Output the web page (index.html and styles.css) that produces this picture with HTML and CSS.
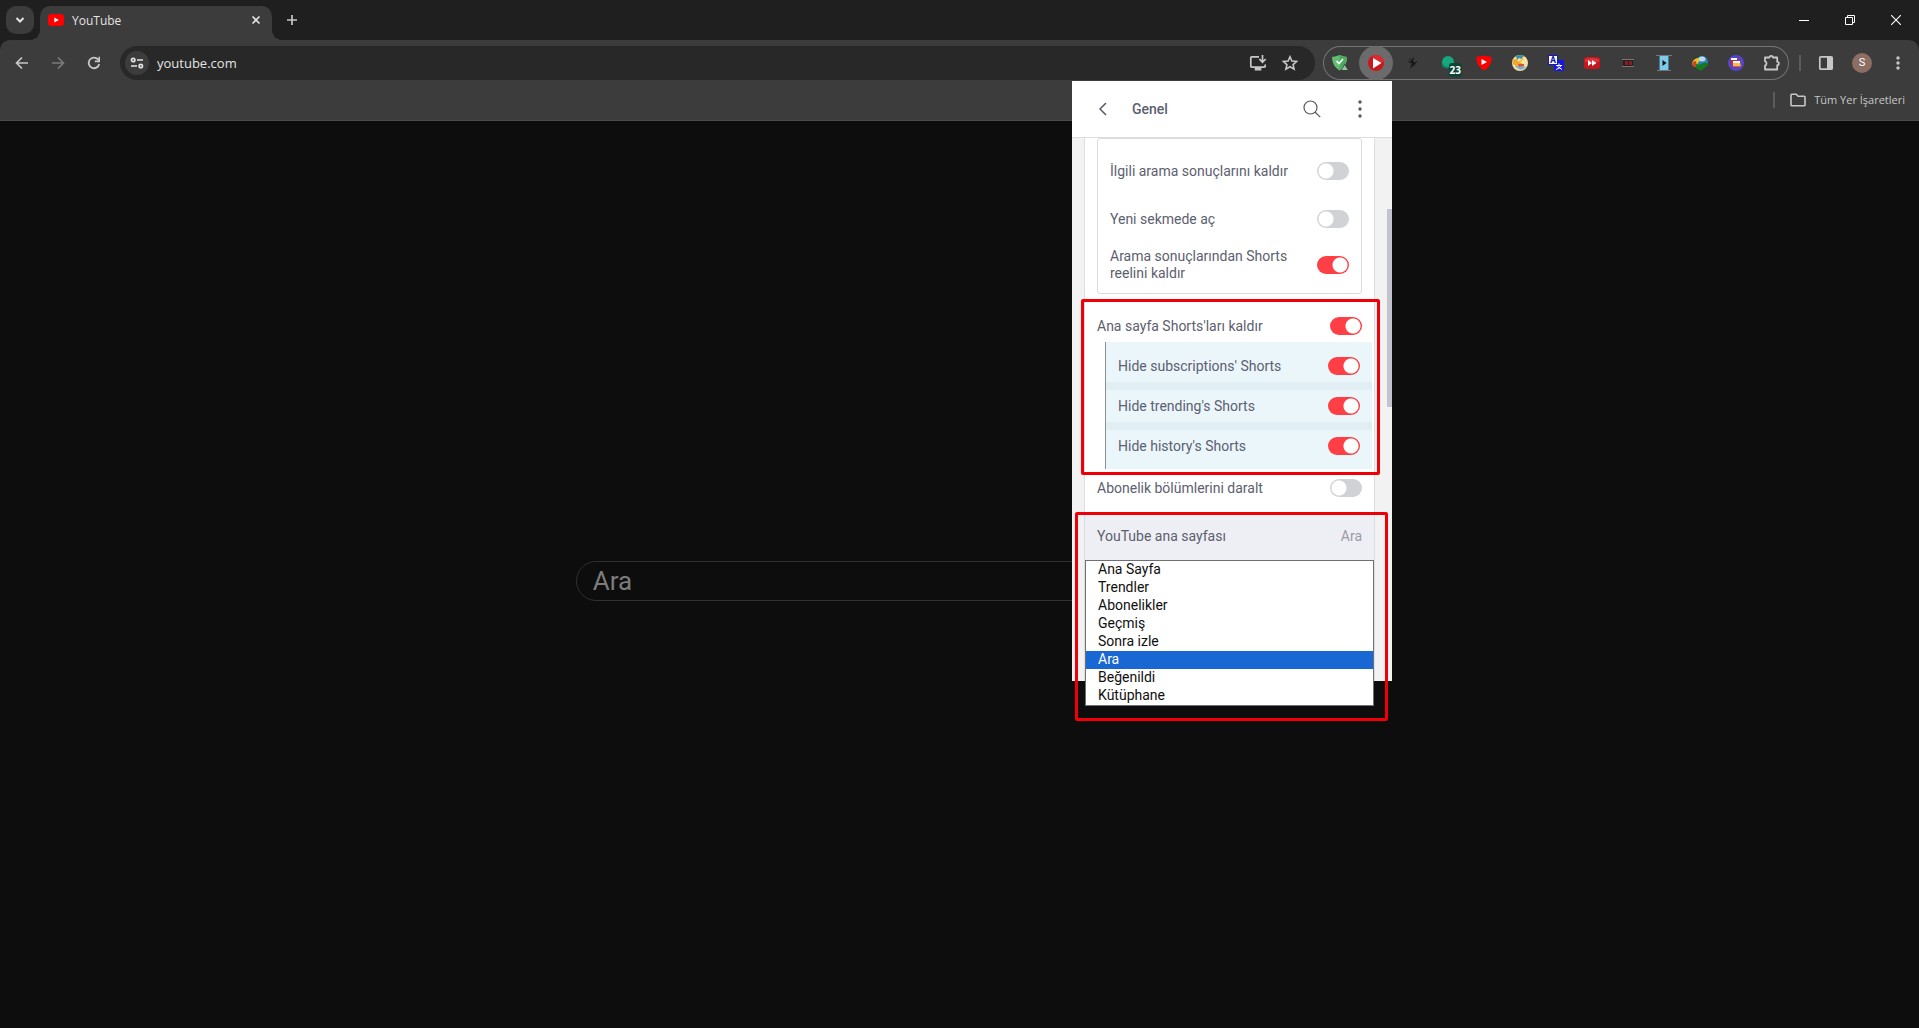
FILE: index.html
```html
<!DOCTYPE html>
<html lang="tr">

<head>
    <meta charset="UTF-8">
    <meta name="viewport" content="width=device-width, initial-scale=1.0">
    <title>YouTube</title>
    <link rel="stylesheet" href="styles.css">
</head>

<body>

    <header class="browser">
        <div class="tabstrip">
            <button class="tab-search" aria-label="Sekmelerde ara">
                <svg width="10" height="10" viewBox="0 0 10 10"><path d="M1.5 3L5 6.5 8.5 3" fill="none" stroke="#e3e3e3" stroke-width="2"/></svg>
            </button>
            <div class="tab">
                <svg width="16" height="16" viewBox="0 0 16 16"><rect y="2" width="16" height="12" rx="3" fill="#f00"/><path d="M6.4 5.4v5.2L10.8 8z" fill="#fff"/></svg>
                <span class="tab-title">YouTube</span>
                <button class="tab-close" aria-label="Sekmeyi kapat">
                    <svg width="10" height="10" viewBox="0 0 10 10"><path d="M1.5 1.5l7 7M8.5 1.5l-7 7" stroke="#e3e3e3" stroke-width="1.6"/></svg>
                </button>
            </div>
            <button class="new-tab" aria-label="Yeni sekme">
                <svg width="12" height="12" viewBox="0 0 12 12"><path d="M6 1v10M1 6h10" stroke="#c7c7c7" stroke-width="1.7"/></svg>
            </button>
            <div class="window-buttons">
                <button aria-label="Küçült"><svg width="10" height="10" viewBox="0 0 10 10"><path d="M0 5.5h10" stroke="#fff"/></svg></button>
                <button aria-label="Önceki boyut"><svg width="10" height="10" viewBox="0 0 10 10"><path d="M.5 2.5h7v7h-7zM2.5 2.5v-2h7v7h-2" fill="none" stroke="#fff"/></svg></button>
                <button aria-label="Kapat"><svg width="10" height="10" viewBox="0 0 10 10"><path d="M0 0l10 10M10 0L0 10" stroke="#fff" stroke-width="1.1"/></svg></button>
            </div>
        </div>

        <div class="toolbar">
            <button class="tool" aria-label="Geri">
                <svg width="16" height="16" viewBox="0 0 16 16"><path d="M14 8H3M8 2.5L2.5 8 8 13.5" fill="none" stroke="#c7c7c7" stroke-width="1.7"/></svg>
            </button>
            <button class="tool" aria-label="İleri" disabled>
                <svg width="16" height="16" viewBox="0 0 16 16"><path d="M2 8h11M8 2.5L13.5 8 8 13.5" fill="none" stroke="#7b7b7b" stroke-width="1.7"/></svg>
            </button>
            <button class="tool" aria-label="Yenile">
                <svg width="16" height="16" viewBox="0 0 16 16"><path d="M13.2 9A5.3 5.3 0 1 1 12 4.4L13.4 6" fill="none" stroke="#c7c7c7" stroke-width="1.8"/><path d="M14 1.8v5.4H8.8V5.6h3.6V1.8z" fill="#c7c7c7"/></svg>
            </button>

            <div class="omnibox">
                <button class="site-info" aria-label="Site bilgileri">
                    <svg width="14" height="12" viewBox="0 0 14 12" fill="none" stroke="#e3e3e3" stroke-width="1.7"><circle cx="3.2" cy="3" r="1.7"/><path d="M7 3h6M1 9h6"/><circle cx="10.8" cy="9" r="1.7"/></svg>
                </button>
                <input class="url" type="text" value="youtube.com" aria-label="Adres çubuğu">
                <button class="tool" aria-label="Uygulamayı yükle">
                    <svg width="18" height="16" viewBox="0 0 18 16" fill="none" stroke="#c7c7c7" stroke-width="1.7"><path d="M10 1.9H2.6a.8.8 0 0 0-.8.8v8.6c0 .4.4.8.8.8h12.8c.4 0 .8-.4.8-.8V9.5"/><path d="M13.5 0v6.5M10.3 4l3.2 3.2L16.7 4"/><path d="M5.7 14h6.6" stroke-width="3"/></svg>
                </button>
                <button class="tool" aria-label="Yer işareti ekle">
                    <svg width="16" height="16" viewBox="0 0 16 16"><path d="M8 1.8l1.9 4.3 4.7.4-3.5 3.1 1 4.6L8 11.8l-4.1 2.4 1-4.6L1.4 6.5l4.7-.4z" fill="none" stroke="#c7c7c7" stroke-width="1.6"/></svg>
                </button>
            </div>

            <div class="extensions">
                <button aria-label="AdGuard">
                    <svg width="18" height="18" viewBox="0 0 18 18"><path d="M1 3q4-.5 7.500-2Q12 2.5 16 3q.3 9-7.500 13.500Q1 12 1 3z" fill="#62bd72"/><path d="M8.500 1Q12 2.500 16 3q.3 9-7.500 13.500z" fill="#4fa960"/><path d="M5.500 7l2.500 2.600L12 5" fill="none" stroke="#fff" stroke-width="1.500"/><path d="M13.500 9.500l4 6.500h-7z" fill="#3c3c3c"/><path d="M13.700 11l3 5h-6z" fill="#8fc79a"/></svg>
                </button>
                <button class="active" aria-label="ImprovedTube">
                    <svg width="18" height="18" viewBox="0 0 18 18"><circle cx="9" cy="9" r="8" fill="#c9171f"/><path d="M5 2a8 8 0 0 1 12 6L9 9z" fill="#dc2a31"/><path d="M6 4v10.500L14.500 9z" fill="#fff"/></svg>
                </button>
                <button aria-label="Bolt">
                    <svg width="14" height="14" viewBox="0 0 14 14"><path d="M9 1L4 7h3l-2 6 6-7H8z" fill="#151515"/><path d="M6 2L3 6M12 5l-4 6" stroke="#222"/></svg>
                </button>
                <button class="with-badge" aria-label="Ghostery 23">
                    <svg width="16" height="16" viewBox="0 0 16 16"><path d="M2 7a6 6 0 0 1 12 0v5H6Q2 12 2 7z" fill="#16a77c"/><path d="M2.500 10q3 3 6 2" stroke="#0e8e68" fill="none" stroke-width="2"/></svg>
                    <span class="badge">23</span>
                </button>
                <button aria-label="Enhancer for YouTube">
                    <svg width="16" height="16" viewBox="0 0 16 16"><path d="M.5 1.500Q4 2 8 .5q4 1.500 7.500 1 1 9-7.500 14Q-.5 10.500.5 1.500z" fill="#f00"/><path d="M5.500 4v6L11 7z" fill="#fff"/></svg>
                </button>
                <button aria-label="Harita">
                    <svg width="18" height="18" viewBox="0 0 18 18"><circle cx="9" cy="9" r="8" fill="#f2dfae"/><path d="M5 2q5-2 8 0l-3 3-2-1-2 2z" fill="#3c8f98"/><path d="M1 6l4-1 3 3 4-4 2 3-4 4-5 1-3-2z" fill="#f2a62e"/><path d="M9 8l5-4 2 3-4 3z" fill="#fbe98f"/><path d="M4 12l8 0 3 1q-5 6-11-1z" fill="#7fb4c8"/><path d="M7 10l6 0 0 2-5 1z" fill="#d75443"/></svg>
                </button>
                <button aria-label="Çeviri">
                    <svg width="18" height="18" viewBox="0 0 18 18"><rect x="7" y="6" width="10" height="11" rx="1" fill="#1717e2"/><rect x="1.500" y="1.500" width="9" height="9" fill="#fff" stroke="#1717cc"/><text x="3" y="9" class="glyph-a">A</text><path d="M9 11.500h6M12 9.500v2M14 11.500q-1 3-5 4M10.500 12.500l4.500 3" stroke="#fff" fill="none"/></svg>
                </button>
                <button aria-label="Hızlı ileri">
                    <svg width="18" height="14" viewBox="0 0 18 14"><rect x="1" y="1" width="16" height="12" rx="3" fill="#c5161d"/><path d="M2 3q6-2 14 0v3H2z" fill="#df3339"/><path d="M5 4v6l4-3zM9 4v6l4.500-3z" fill="#fff"/></svg>
                </button>
                <button aria-label="Sinema">
                    <svg width="14" height="10" viewBox="0 0 14 10"><path d="M2 1h10v8H2z" fill="#222"/><path d="M1 1.500h12M1 8.500h12" stroke="#777"/><path d="M4 3h3v4H4zM8 3h3v4H8z" fill="#8d1b22"/></svg>
                </button>
                <button aria-label="Video">
                    <svg width="16" height="18" viewBox="0 0 16 18"><path d="M3 2h10v14H3z" fill="#7ccbea"/><path d="M0 1.500h16M1 16.500h14" stroke="#777"/><path d="M3.500 2v14M12.500 2v14" stroke="#4b7d92"/><path d="M6.500 6v6l4-3z" fill="#111"/></svg>
                </button>
                <button aria-label="IDM">
                    <svg width="18" height="18" viewBox="0 0 18 18"><circle cx="11" cy="8" r="6" fill="#2f7fc0"/><ellipse cx="11" cy="5" rx="3.500" ry="2.500" fill="#b9dcef"/><path d="M1 9q2-5 7-5 1 3-1 5l-2 4-3-1z" fill="#e9c521"/><path d="M1 10q1-3 4-3 1 3 0 6-3 0-4-3z" fill="#c9461f"/><path d="M5 10q3 1 5 0 3-2 7-1 0 3-3 4l-4 4-5-3z" fill="#137b1c"/></svg>
                </button>
                <button aria-label="Dosyalar">
                    <svg width="18" height="18" viewBox="0 0 18 18"><circle cx="9" cy="9" r="8" fill="#5546c8"/><path d="M4 4h6v2H4z" fill="#fff"/><path d="M4 6h9v1H6v4H4z" fill="#cb2742"/><path d="M6 8h7l1 5H6z" fill="#ffb74b"/><path d="M6 7h7v2H6z" fill="#fff"/><path d="M6 12h8v1H6z" fill="#e4572f"/></svg>
                </button>
                <button aria-label="Uzantılar">
                    <svg width="18" height="18" viewBox="0 0 18 18"><path d="M2 3.500h4.500a1.700 1.700 0 0 1 3.400 0h4.300v4.300a1.700 1.700 0 0 1 0 3.400v4.300H2v-4a2.200 2.200 0 0 0 0-4.200z" fill="none" stroke="#c7c7c7" stroke-width="1.800" stroke-linejoin="round"/></svg>
                </button>
            </div>

            <span class="divider"></span>
            <button class="tool" aria-label="Yan panel">
                <svg width="16" height="16" viewBox="0 0 16 16"><rect x="1.800" y="1.800" width="12.400" height="12.400" rx="1" fill="none" stroke="#c7c7c7" stroke-width="1.700"/><path d="M9 2h5v12H9z" fill="#c7c7c7"/></svg>
            </button>
            <button class="tool" aria-label="Profil"><span class="avatar">S</span></button>
            <button class="tool" aria-label="Menü">
                <svg width="4" height="16" viewBox="0 0 4 16" fill="#c7c7c7"><circle cx="2" cy="3" r="1.700"/><circle cx="2" cy="8" r="1.700"/><circle cx="2" cy="13" r="1.700"/></svg>
            </button>
        </div>

        <nav class="bookmarks">
            <span class="divider"></span>
            <a href="#">
                <svg width="16" height="14" viewBox="0 0 16 14"><path d="M1 2.500V12q0 .8.800.8h12.400q.8 0 .8-.8V4q0-.8-.8-.8H8L6.300 1.300H1.800q-.8 0-.8.8z" fill="none" stroke="#c7c7c7" stroke-width="1.600"/></svg>
                Tüm Yer İşaretleri
            </a>
        </nav>
    </header>

    <main class="page">
        <input class="search" type="text" placeholder="Ara" aria-label="Ara">
    </main>

    <!-- extension popup -->
    <section class="popup">
        <div class="popup-header">
            <button class="back" aria-label="Geri">
                <svg width="10" height="14" viewBox="0 0 10 14"><path d="M7 1L1 7l6 6" fill="none" stroke="#555862" stroke-width="1.500"/></svg>
            </button>
            <h1>Genel</h1>
            <button aria-label="Ara">
                <svg width="18" height="18" viewBox="0 0 18 18" fill="none" stroke="#555862" stroke-width="1.200"><circle cx="7.500" cy="7.500" r="6.500"/><path d="M12 12l5.200 5.200"/></svg>
            </button>
            <button aria-label="Menü">
                <svg width="4" height="18" viewBox="0 0 4 18" fill="#555862"><circle cx="2" cy="2" r="1.700"/><circle cx="2" cy="9" r="1.700"/><circle cx="2" cy="16" r="1.700"/></svg>
            </button>
        </div>

        <div class="settings">
            <div class="group">
                <label class="row">İlgili arama sonuçlarını kaldır <input class="switch" type="checkbox"></label>
                <label class="row">Yeni sekmede aç <input class="switch" type="checkbox"></label>
                <label class="row two-line"><span>Arama sonuçlarından Shorts reelini kaldır</span> <input class="switch" type="checkbox" checked></label>
            </div>

            <label class="row home-shorts">Ana sayfa Shorts'ları kaldır <input class="switch" type="checkbox" checked></label>
            <div class="sublist">
                <label class="row">Hide subscriptions' Shorts <input class="switch" type="checkbox" checked></label>
                <label class="row">Hide trending's Shorts <input class="switch" type="checkbox" checked></label>
                <label class="row">Hide history's Shorts <input class="switch" type="checkbox" checked></label>
            </div>

            <label class="row collapse">Abonelik bölümlerini daralt <input class="switch" type="checkbox"></label>

            <div class="row select-row">
                <label for="homepage">YouTube ana sayfası</label>
                <span class="value">Ara</span>
                <select id="homepage" class="options" size="8">
                    <option>Ana Sayfa</option>
                    <option>Trendler</option>
                    <option>Abonelikler</option>
                    <option>Geçmiş</option>
                    <option>Sonra izle</option>
                    <option selected>Ara</option>
                    <option>Beğenildi</option>
                    <option>Kütüphane</option>
                </select>
            </div>
        </div>

        <div class="scroll-thumb"></div>
        <div class="mark mark-shorts"></div>
        <div class="mark mark-home"></div>
    </section>

</body>

</html>
```
FILE: styles.css
```css
* {
    box-sizing: border-box;
}

html,
body {
    height: 100%;
}

body {
    margin: 0;
    position: relative;
    display: flex;
    flex-direction: column;
    overflow: hidden;
    background: #0d0d0d;
    font-family: Roboto, sans-serif;
}

button {
    display: flex;
    align-items: center;
    justify-content: center;
    flex-shrink: 0;
    padding: 0;
    border: 0;
    background: none;
}

svg {
    flex-shrink: 0;
}

/* Browser chrome */

.browser {
    background: #1f1f1f;
    font-family: "Open Sans", "Noto Sans", sans-serif;
    color: #e3e3e3;
}

.tabstrip {
    display: flex;
    align-items: center;
    height: 40px;
    padding-left: 6px;
}

.tab-search {
    width: 28px;
    height: 28px;
    border-radius: 10px;
    background: #3c3c3c;
}

.tab {
    position: relative;
    display: flex;
    align-items: center;
    align-self: flex-end;
    gap: 8px;
    width: 232px;
    height: 34px;
    margin-left: 6px;
    padding: 0 6px 6px 8px;
    border-radius: 10px 10px 0 0;
    background: #3c3c3c;
}

.tab::before,
.tab::after {
    content: '';
    position: absolute;
    bottom: 0;
    width: 10px;
    height: 10px;
}

.tab::before {
    left: -10px;
    background: radial-gradient(circle at 0 0, transparent 10px, #3c3c3c 10px);
}

.tab::after {
    right: -10px;
    background: radial-gradient(circle at 100% 0, transparent 10px, #3c3c3c 10px);
}

.tab-title {
    flex: 1;
    font-size: 12px;
}

.tab-close {
    width: 20px;
    height: 20px;
}

.new-tab {
    width: 28px;
    height: 28px;
    margin-left: 6px;
}

.window-buttons {
    display: flex;
    margin-left: auto;
}

.window-buttons button {
    width: 46px;
    height: 40px;
}

.toolbar {
    display: flex;
    align-items: center;
    gap: 8px;
    height: 46px;
    padding: 0 7px 0 8px;
    border-radius: 10px 10px 0 0;
    background: #3c3c3c;
}

.tool {
    width: 28px;
    height: 28px;
}

.omnibox {
    display: flex;
    align-items: center;
    gap: 4px;
    flex: 1;
    height: 34px;
    margin-left: 4px;
    padding: 0 11px 0 5px;
    border-radius: 17px;
    background: #282828;
}

.site-info {
    width: 24px;
    height: 24px;
    border-radius: 50%;
    background: #3c3c3c;
}

.url {
    flex: 1;
    min-width: 0;
    padding: 0 4px;
    border: 0;
    background: none;
    color: #e3e3e3;
    font: 13px "Open Sans", "Noto Sans", sans-serif;
}

.extensions {
    display: flex;
    gap: 2px;
    border-radius: 17px;
    box-shadow: inset 0 0 0 1px #757575;
}

.extensions button {
    width: 34px;
    height: 34px;
    border-radius: 50%;
}

.extensions .active {
    background: #6b6b6b;
}

.with-badge {
    position: relative;
}

.badge {
    position: absolute;
    right: 3px;
    bottom: 3px;
    padding: 0 1px;
    border-radius: 3px;
    background: #0d4436;
    color: #fff;
    font: bold 10px/14px "Open Sans", sans-serif;
}

.glyph-a {
    fill: #1717a0;
    font: bold 9px Roboto, sans-serif;
}

.divider {
    width: 2px;
    height: 16px;
    margin: 0 3px 0 2px;
    background: #5c5c5c;
}

.avatar {
    width: 20px;
    height: 20px;
    border-radius: 50%;
    background: #8d6e63;
    color: #fff;
    font: 11px/20px Roboto, sans-serif;
}

.bookmarks {
    display: flex;
    align-items: center;
    justify-content: flex-end;
    gap: 12px;
    height: 35px;
    padding: 0 14px 6px 0;
    border-bottom: 1px solid #4a4a4a;
    background: #3c3c3c;
}

.bookmarks a {
    display: flex;
    align-items: center;
    gap: 8px;
    color: #c7c7c7;
    font-size: 11px;
    line-height: 16px;
    text-decoration: none;
}

/* Page */

.page {
    flex: 1;
    padding-top: 440px;
}

.search {
    display: block;
    width: 40%;
    height: 40px;
    margin: 0 auto;
    padding: 0 16px;
    border: 1px solid #303030;
    border-radius: 20px;
    background: #0d0d0d;
    color: #fff;
    font: 26px Roboto, sans-serif;
}

.search::placeholder {
    color: #7c7c7c;
}

/* Popup, anchored under its toolbar button */

.popup {
    position: absolute;
    top: 81px;
    right: 527px;
    display: flex;
    flex-direction: column;
    width: 320px;
    height: 600px;
    background: #f3f2f2;
    color: #5c6070;
    font-size: 14px;
    line-height: 17px;
}

.popup-header {
    display: flex;
    align-items: center;
    gap: 8px;
    height: 57px;
    padding: 0 12px;
    border-bottom: 1px solid #dcdde0;
    background: #fff;
}

.popup-header button {
    width: 40px;
    height: 40px;
}

.popup-header h1 {
    flex: 1;
    margin: 0;
    font-size: 14px;
    font-weight: 500;
}

.settings {
    flex: 1;
    margin: 0 17px 0 12px;
    border: solid #dcdde3;
    border-width: 0 1px;
    background: #fff;
}

.group {
    margin: 0 12px 16px;
    padding: 8px 12px 6px;
    border: 1px solid #d9dbe0;
    border-radius: 3px;
}

.row {
    display: flex;
    align-items: center;
    justify-content: space-between;
    gap: 16px;
    height: 48px;
}

.group .two-line {
    height: 44px;
}

.home-shorts {
    height: 32px;
    padding: 0 12px;
}

.sublist {
    margin: 0 2px 0 20px;
    padding: 8px 0 7px;
    border-left: 1px solid #8b8f99;
    background: #ebf6fb;
}

.sublist .row {
    height: 32px;
    padding: 0 12px;
}

.sublist .row + .row {
    height: 40px;
    border-top: 8px solid #e1eef3;
}

.collapse {
    height: 38px;
    margin-bottom: 5px;
    padding: 0 12px;
}

.select-row {
    position: relative;
    padding: 0 12px;
    background: #eeeff4;
}

.value {
    color: #9a9ca6;
}

.switch {
    appearance: none;
    flex-shrink: 0;
    width: 32px;
    height: 18px;
    margin: 0;
    border-radius: 9px;
    background: radial-gradient(circle at 9px 9px, #fff 7px, transparent 8px) #d0d2d5;
}

.switch:checked {
    background: radial-gradient(circle at 23px 9px, #fff 7px, transparent 8px) #ff3f46;
}

.options {
    position: absolute;
    top: 100%;
    left: 0;
    width: 100%;
    height: 146px;
    padding: 0;
    border: 1px solid #6f7073;
    border-radius: 0;
    outline: 0;
    background: #fff;
    color: #101010;
    font: 14px Roboto, sans-serif;
    overflow: hidden;
}

.options option {
    height: 18px;
    min-height: 18px;
    padding: 0 12px;
    line-height: 18px;
}

.options option:checked {
    background: linear-gradient(#1967d2, #1967d2);
    color: #fff;
}

.scroll-thumb {
    position: absolute;
    top: 128px;
    right: 0;
    width: 5px;
    height: 198px;
    background: #c3c3d0;
}

/* Red frames around the highlighted settings */

.mark {
    position: absolute;
    border: 3px solid #f00006;
    border-radius: 2px;
    pointer-events: none;
}

.mark-shorts {
    top: 218px;
    left: 9px;
    width: 299px;
    height: 176px;
}

.mark-home {
    top: 431px;
    left: 3px;
    width: 313px;
    height: 209px;
}
```
